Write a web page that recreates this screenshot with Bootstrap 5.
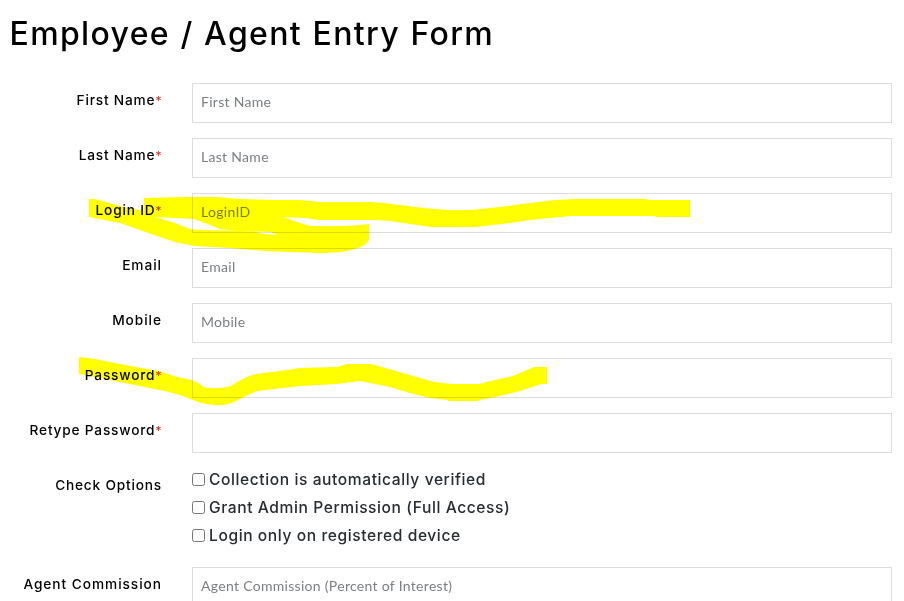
<!DOCTYPE html>
<html lang="en">
<head>
<meta charset="utf-8">
<meta name="viewport" content="width=device-width, initial-scale=1">
<title>Employee / Agent Entry Form</title>
<link href="https://cdn.jsdelivr.net/npm/bootstrap@5.3.0/dist/css/bootstrap.min.css" rel="stylesheet">
<style>
body{font-family:Inter,"Liberation Sans",sans-serif;background:#fff;height:601px;overflow:hidden}
.page-title{font-size:32px;font-weight:500;line-height:40px;letter-spacing:1.35px;word-spacing:.6px;color:#000;margin:14px 0 29px 9.5px;white-space:nowrap}
.entry-row{display:grid;grid-template-columns:162px 700px;column-gap:30px;margin-bottom:15px}
.entry-label{font-size:13.7px;font-weight:500;line-height:20px;letter-spacing:.8px;color:#000;padding-top:7px;white-space:nowrap}
.wide-label{letter-spacing:.95px}
.req{color:#e8211c;font-weight:400;font-size:12px;letter-spacing:.6px}
.entry-row .form-control{height:40px;border:1px solid #dcdcdc;padding:0 8px 3px;font-family:Lato,sans-serif;font-size:14px;letter-spacing:.3px}
.entry-row .form-control::placeholder{color:#7b7f82}
.option{height:28px;font-size:15.6px;font-weight:500;line-height:24px;color:#272c30;white-space:nowrap;letter-spacing:.58px}
.option .form-check-input{width:13px;height:13px;border:1px solid #767676;border-radius:2.5px;margin:0 4px 2px 0}
.marker{left:0;top:0;mix-blend-mode:multiply;pointer-events:none;z-index:2}
</style>
<script src="https://cdn.jsdelivr.net/npm/bootstrap@5.3.0/dist/js/bootstrap.bundle.min.js"></script>
</head>
<body class="position-relative">
<main class="overflow-hidden">
<h1 class="page-title">Employee / Agent Entry Form</h1>
<form>
<div class="entry-row"><label class="entry-label text-end" for="f1">First Name<span class="req">*</span></label><input id="f1" class="form-control rounded-0" placeholder="First Name"></div>
<div class="entry-row"><label class="entry-label text-end" for="f2">Last Name<span class="req">*</span></label><input id="f2" class="form-control rounded-0" placeholder="Last Name"></div>
<div class="entry-row"><label class="entry-label text-end" for="f3">Login ID<span class="req">*</span></label><input id="f3" class="form-control rounded-0" placeholder="LoginID"></div>
<div class="entry-row"><label class="entry-label wide-label text-end" for="f4">Email</label><input id="f4" class="form-control rounded-0" placeholder="Email"></div>
<div class="entry-row"><label class="entry-label wide-label text-end" for="f5">Mobile</label><input id="f5" class="form-control rounded-0" placeholder="Mobile"></div>
<div class="entry-row"><label class="entry-label text-end" for="f6">Password<span class="req">*</span></label><input id="f6" type="password" class="form-control rounded-0"></div>
<div class="entry-row"><label class="entry-label text-end" for="f7">Retype Password<span class="req">*</span></label><input id="f7" type="password" class="form-control rounded-0"></div>
<div class="entry-row"><span class="entry-label text-end">Check Options</span>
<div>
<label class="option d-flex align-items-center pb-1"><input type="checkbox" class="form-check-input flex-shrink-0">Collection is automatically verified</label>
<label class="option d-flex align-items-center pb-1"><input type="checkbox" class="form-check-input flex-shrink-0">Grant Admin Permission (Full Access)</label>
<label class="option d-flex align-items-center pb-1"><input type="checkbox" class="form-check-input flex-shrink-0">Login only on registered device</label>
</div></div>
<div class="entry-row"><label class="entry-label wide-label text-end" for="f8">Agent Commission</label><input id="f8" class="form-control rounded-0" placeholder="Agent Commission (Percent of Interest)"></div>
</form>
</main>
<!-- highlighter strokes over Login ID and Password -->
<svg class="marker position-absolute" width="904" height="601" viewBox="0 0 904 601" fill="#ff0" fill-rule="evenodd" aria-hidden="true">
<path d="M89 199L95 199L120 206L144 211V198L185 197H217L240 199L275 200L300 200L320 202H370L384 203Q435 210 452 210H471L500 207L530 203L555 200L575 199H646L648 200H690V217H656L654 216H570L530 220L510 223L475 227H431L390 221L375 220H320L305 218L283 217L297 222L310 226H345L360 225L369 224V240Q366 246 355 249Q343 253 320 253L265 251L230 248L195 246L175 242L160 237L140 230L120 223L90 217H89ZM155 217L175 223L190 229L200 230L250 231L265 234L277 235L271 232L240 231L220 229L205 223L194 219L175 218Z"/>
<path d="M79 357L95 359L130 366L159 371L177 377L192 380Q201 384 203 387Q216 390 231 386Q246 376 256 374L280 371L300 368L337 367L347 364H371L389 369L413 376L434 382L452 384H479L495 380L513 376L534 367H547V384H541L520 391L495 397L479 400V401H448V400L430 398L410 393L390 387L360 381L337 384L300 386L257 391Q247 395 232 403Q215 408 198 402L183 396L165 391L120 382L79 374Z"/>
</svg>
</body>
</html>
